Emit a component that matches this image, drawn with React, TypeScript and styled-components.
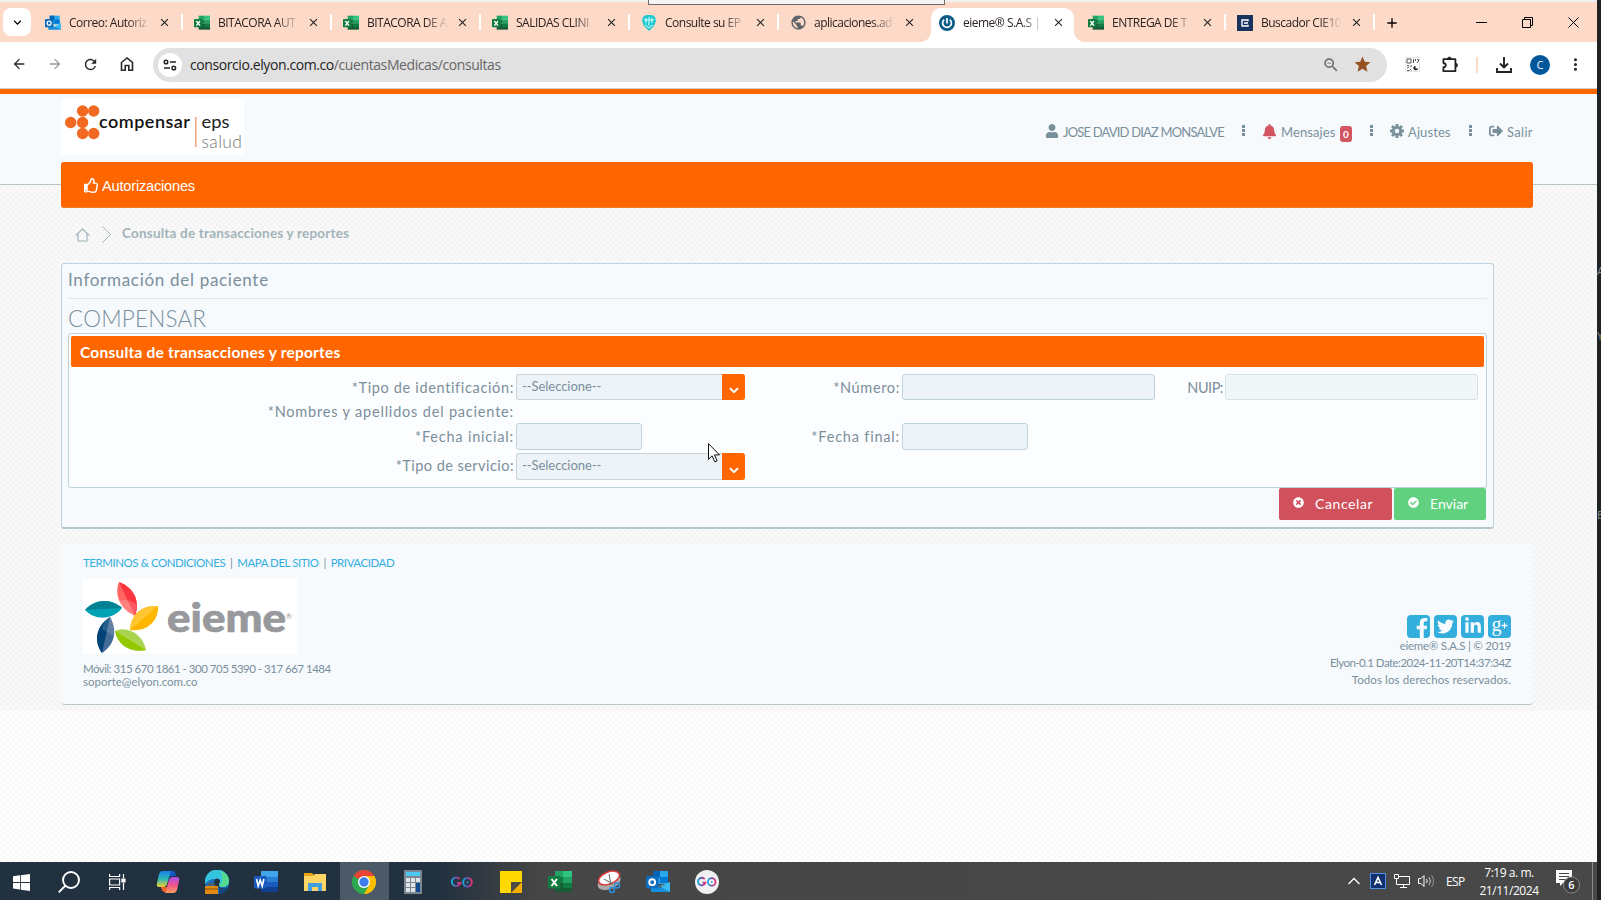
import React from 'react';
import styled, { createGlobalStyle, css } from 'styled-components';
import {
  FaUser, FaBell, FaSignOutAlt, FaRegThumbsUp, FaTimesCircle, FaCheckCircle,
  FaFacebookF, FaTwitter, FaLinkedinIn,
} from 'react-icons/fa';
import {
  MdArrowBack, MdArrowForward, MdRefresh, MdClose, MdAdd, MdStar,
  MdZoomOut, MdMoreVert, MdExpandMore, MdPublic,
} from 'react-icons/md';

const ORANGE = '#ff6600';
const SLATE = '#7a8f9c';
const ui = `'Open Sans', 'Noto Sans', sans-serif`;
const gothic = `Lato, 'Open Sans', sans-serif`;

const Global = createGlobalStyle`
  * { box-sizing: border-box; }
  body { margin: 0; overflow: hidden; font-family: ${ui}; }
  svg { display: block; flex: none; }
`;

const Screen = styled.div`
  position: relative;
  width: 1601px; height: 900px;
  display: flex; flex-direction: column;
  background: #1f2323;
  overflow: hidden;
`;
const Browser = styled.div`
  width: 1597px; height: 862px;
  display: flex; flex-direction: column;
  background: #fff;
`;

/* ---------- tab strip ---------- */
const TabStrip = styled.div`
  height: 42px; flex: none;
  display: flex; align-items: stretch;
  padding-left: 3px;
  border-top: 2px solid #f1f1f3;
  background: #fdd9c8;
`;
const TabSearch = styled.div`
  width: 28px; height: 28px; margin: 6px 3px 0 0;
  border-radius: 8px; background: #fff;
  display: flex; align-items: center; justify-content: center;
`;
const Tab = styled.div<{ $sep: boolean }>`
  width: 149px; padding-top: 6px;
  position: relative;
  ${p => p.$sep && css`
    &::after { content: ''; position: absolute; right: 0; top: 12px; width: 2px; height: 16px; background: #fff; }
  `}
`;
const TabBody = styled.div<{ $active: boolean }>`
  height: 34px; margin: 0 3px;
  padding: 0 0 5px 8px;
  display: flex; align-items: center;
  position: relative;
  border-radius: 10px 10px 0 0;
  background: ${p => (p.$active ? '#fff' : 'transparent')};
  ${p => p.$active && css`
    &::before, &::after { content: ''; position: absolute; bottom: 0; width: 10px; height: 10px; }
    &::before { left: -10px; background: radial-gradient(circle at 0 0, transparent 9.5px, #fff 10px); }
    &::after { right: -10px; background: radial-gradient(circle at 100% 0, transparent 9.5px, #fff 10px); }
  `}
`;
const TabTitle = styled.div`
  width: 81px; margin-left: 8px; margin-right: 8px; padding-top: 1px;
  overflow: hidden; white-space: nowrap;
  font: 12px/18px ${ui}; letter-spacing: -0.5px; color: #2c2320;
  mask-image: linear-gradient(90deg, #000 72%, transparent 100%);
`;
const WindowControls = styled.div`
  flex: 1; display: flex; justify-content: flex-end; align-items: center;
  gap: 35px; padding: 1px 18px 0 0;
`;
const NewTab = styled.div`
  display: flex; align-items: center; padding: 1px 0 0 9px;
`;

/* ---------- address bar ---------- */
const Toolbar = styled.div`
  height: 47px; flex: none;
  display: flex; align-items: center;
  padding: 0 10px 1px 11px;
  border-bottom: 1px solid #cfcfcf;
  background: #fff; color: #2a2a2a;
`;
const NavIcons = styled.div`
  width: 142px; display: flex; gap: 19.6px;
`;
const Address = styled.div`
  width: 1234px; height: 34px; border-radius: 17px;
  padding: 0 15px 0 5px;
  display: flex; align-items: center;
  background: #e1e1e1;
`;
const SiteInfo = styled.div`
  width: 24px; height: 24px; border-radius: 50%; background: #fff;
  display: flex; align-items: center; justify-content: center;
`;
const Url = styled.div`
  flex: 1; margin-left: 8px; padding-top: 1px;
  font: 14px/20px ${ui}; letter-spacing: -0.41px; color: #1d1d1d;
  span { color: #666; }
`;
const AddressIcons = styled.div`
  display: flex; align-items: center; gap: 13px;
`;
const Actions = styled.div`
  flex: 1; display: flex; align-items: center;
  padding-left: 18px;
`;
const Action = styled.div<{ $gap: number }>`
  margin-left: ${p => p.$gap}px;
`;
const ActionSep = styled.div`width: 2px; height: 16px; margin-left: 17px; background: #fdd9c8;`;
const Avatar = styled.div`
  width: 20px; height: 20px; border-radius: 50%;
  background: #00579c; color: #fff;
  font: 10.5px/20px ${ui}; text-align: center;
`;

/* ---------- page ---------- */
const Page = styled.main`
  flex: 1; min-height: 0;
  border-top: 5px solid ${ORANGE};
  background-color: #fff;
  background-image:
    linear-gradient(rgba(0,0,0,.022), rgba(0,0,0,.022)),
    repeating-conic-gradient(rgba(0,0,0,.02) 0 25%, transparent 0 50%);
  background-size: 100% 617px, 6px 6px;
  background-repeat: no-repeat, repeat;
  color: ${SLATE};
`;
const Header = styled.header`
  height: 91px; padding: 5px 64px 0 61px;
  background: #f6fafd; border-bottom: 1px solid #b6c3cb;
`;
const HeaderTop = styled.div`
  height: 63px; display: flex; justify-content: space-between; align-items: flex-start;
`;
const LogoBox = styled.div`width: 183px; height: 56px; background: #fff;`;
const UserMenu = styled.div`
  height: 64px; display: flex; align-items: center;
`;
const MenuItem = styled.div`
  display: flex; align-items: center; gap: 4px;
`;
const MenuText = styled.span<{ $w: number; $ls?: number }>`
  width: ${p => p.$w}px; white-space: nowrap; padding-top: 2px;
  font: 13px/18px ${gothic}; letter-spacing: ${p => p.$ls ?? 0}px;
`;
const Badge = styled.span`
  width: 12px; height: 16px; margin-top: 5px; border-radius: 3px;
  background: #d2555f; color: #fff;
  font: bold 10px/16px ${gothic}; text-align: center;
`;
const Dots = styled.i`
  width: 3px; height: 11px; margin: 0 17.5px 1px 17.5px;
  background: linear-gradient(${SLATE} 0 3px, transparent 3px 4px, ${SLATE} 4px 7px, transparent 7px 8px, ${SLATE} 8px);
`;
const MainNav = styled.nav`
  height: 46px; padding: 2px 0 0 23px;
  display: flex; align-items: center; gap: 3px;
  border-radius: 3px; background: ${ORANGE};
  border-bottom: 1px solid #ee7a2c; color: #fff;
  font: 14.6px/20px 'Liberation Sans', sans-serif; letter-spacing: -0.2px;
`;
const Crumbs = styled.div`
  height: 78px; padding: 46px 0 0 75px;
  display: flex; align-items: flex-start;
  color: #a3b3ba;
`;
const CrumbText = styled.div`
  margin: -7px 0 0 11px;
  font: bold 13.5px/18px ${gothic}; letter-spacing: 0.2px;
`;
const Panel = styled.section`
  width: 1433px; height: 266px; margin-left: 61px; padding: 0 6px 0 6px;
  border: 1px solid #bfd3de; border-bottom: 2px solid #b6c6ce; border-radius: 3px;
  background: #f6fafd;
`;
const PanelTitle = styled.h2`
  height: 35px; margin: 0; border-bottom: 1px solid #e2e9ec;
  font: 400 17px/32px ${gothic}; letter-spacing: 0.7px;
`;
const Entity = styled.h1`
  height: 34px; margin: 0;
  font: 300 22.5px/40px ${gothic}; letter-spacing: 0.2px;
`;
const Fieldset = styled.div`
  height: 155px; padding: 2px;
  border: 1px solid #bfd3de; border-radius: 3px; background: #fcfdfe;
`;
const Legend = styled.div`
  height: 31px; padding: 1px 0 0 9px; border-radius: 2px;
  background: ${ORANGE}; color: #fff;
  font: bold 15.5px/31px ${gothic}; letter-spacing: 0.22px;
`;
const Fields = styled.div`
  display: grid; padding-top: 7px;
  grid-template-columns: 443px 235px 151px 256px 67px 256px;
  grid-template-rows: 27px 22px 28px 29px;
`;
const Label = styled.label<{ $col?: number; $ls?: number }>`
  grid-column: ${p => p.$col ?? 1};
  align-self: center; justify-self: end;
  white-space: nowrap;
  font: 14.5px/20px ${gothic}; letter-spacing: ${p => p.$ls ?? 0.65}px;
`;
const Control = styled.div<{ $w: number; $dim?: boolean; $tall?: boolean }>`
  width: ${p => p.$w}px; height: ${p => (p.$tall ? 27 : 26)}px; margin-left: 2px;
  border: 1px solid ${p => (p.$dim ? '#d6e2e8' : '#bfd3de')}; border-radius: 3px;
  background: ${p => (p.$dim ? '#f1f6f9' : '#edf3f7')};
`;
const Select = styled.div<{ $low?: boolean }>`
  width: 229px; height: ${p => (p.$low ? 27 : 26)}px; margin: ${p => (p.$low ? 2 : 0)}px 0 0 2px;
  display: flex; justify-content: space-between; align-items: stretch;
  padding-left: 6px; border-radius: 3px; overflow: hidden;
  background: #edf3f7; box-shadow: inset 0 0 0 1px #c9d2d6;
  font: 13px/25px ${gothic}; letter-spacing: -0.05px;
`;
const SelectArrow = styled.span`
  width: 23px; background: ${ORANGE};
  display: flex; align-items: center; justify-content: center; padding-top: 7px;
`;
const Buttons = styled.div`
  display: flex; justify-content: flex-end; gap: 2px; padding-right: 1px;
`;
const Button = styled.button<{ $bg: string; $w: number; $ls?: number }>`
  width: ${p => p.$w}px; height: 32px; padding: 0 0 0 14px;
  display: flex; align-items: center; gap: 11px;
  border: 0; border-radius: 2px; background: ${p => p.$bg}; color: #fff;
  font: 14px/20px ${gothic}; letter-spacing: ${p => p.$ls ?? 0}px;
  svg { margin-bottom: 3px; }
`;
const Footer = styled.footer`
  width: 1472px; height: 162px; margin: 14px 0 0 61px; padding: 11px 22px 0;
  display: flex; justify-content: space-between;
  border-bottom: 1px solid #b9c6cc; border-radius: 4px;
  background: #f6fafd;
  font: 11.5px/13px ${gothic};
`;
const Links = styled.div`
  height: 25px; line-height: 18px; white-space: nowrap; letter-spacing: -0.45px;
  display: flex; gap: 4.8px;
  a { color: #34aedd; }
`;
const Contact = styled.div`
  margin-top: 8px;
  div:first-child { letter-spacing: -0.5px; }
`;
const FooterRight = styled.div`
  display: flex; flex-direction: column; align-items: flex-end;
  padding-top: 61px; line-height: 17px;
`;
const Social = styled.div`
  display: flex; gap: 4px; height: 24px; margin-bottom: -2px;
`;
const SocialTile = styled.span<{ $x?: number }>`
  width: 23px; height: 23px; border-radius: 4px;
  display: flex; align-items: flex-end; justify-content: center;
  padding-left: ${p => p.$x ?? 0}px;
  background: #34aedd; color: #f6fafd; overflow: hidden;
`;
const Fine = styled.div<{ $ls: number }>`letter-spacing: ${p => p.$ls}px;`;

/* ---------- taskbar ---------- */
const Taskbar = styled.div`
  width: 1597px; height: 38px;
  display: flex; align-items: center;
  background: linear-gradient(90deg, #213140 0, #22313f 440px, #464646 540px, #484848);
`;
const Slot = styled.div<{ $w: number; $on?: boolean }>`
  width: ${p => p.$w}px; height: 38px;
  display: flex; align-items: center; justify-content: center; padding-top: 2px;
  background: ${p => (p.$on ? '#4c5966' : 'transparent')};
`;
const Tray = styled.div`
  flex: 1; height: 38px; margin-right: 4px; display: flex; align-items: center; justify-content: flex-end;
  color: #fff; border-right: 1px solid #8b8b8b;
  font: 12px/18px ${ui};
`;
const Lang = styled.span`width: 22px; margin: 0 11px 0 11px; padding-top: 1px; letter-spacing: -0.6px;`;
const Clock = styled.div`width: 60px; text-align: center; white-space: nowrap; letter-spacing: -0.45px; padding-top: 1px;`;

/* ---------- overlays ---------- */
const TopPopup = styled.div`
  position: absolute; left: 648px; top: 0; width: 297px; height: 5px;
  border: 1px solid #6b6b6b; border-top: 0; background: #f5f5f5;
`;
const Cursor = styled.svg`position: absolute; left: 708px; top: 443px;`;
const Behind = styled.div`
  position: absolute; left: 1597px; top: 264px; width: 4px; height: 258px; overflow: hidden;
  display: flex; flex-direction: column; justify-content: space-between;
  font: 11px/14px ${ui}; color: #8b8f8f;
  span:nth-child(2) { margin-bottom: 115px; }
`;

/* ---------- drawings ---------- */
const Excel = ({ s = 16 }: { s?: number }) => (
  <svg width={s} height={s} viewBox="0 0 24 24">
    <path d="M7 1h8v6H7z" fill="#21a366" /><path d="M15 1h9v6h-9z" fill="#33c481" />
    <path d="M7 7h8v6H7z" fill="#107c41" /><path d="M15 7h9v6h-9z" fill="#21a366" />
    <path d="M7 13h17v9H7z" fill="#185c37" /><path d="M15 13h9v5h-9z" fill="#107c41" />
    <rect y="6" width="12.5" height="12.5" rx="1" fill="#107c41" />
    <path d="M3.5 9l5.5 7M9 9l-5.5 7" stroke="#fff" strokeWidth="2" />
  </svg>
);
const Outlook = ({ s = 16 }: { s?: number }) => (
  <svg width={s} height={s} viewBox="0 0 24 24">
    <path d="M7 1h15v13H7z" fill="#28a8ea" /><path d="M7 1h7v7H7z" fill="#0364b8" /><path d="M14 7h8v6h-8z" fill="#0078d4" />
    <path d="M5 12l10 6 9-6v10H5z" fill="#1490df" /><path d="M24 12v10L13 16z" fill="#50d9ff" opacity=".6" />
    <rect y="6" width="12.5" height="12.5" rx="1" fill="#0f6cbd" />
    <circle cx="6.2" cy="12.2" r="2.9" fill="none" stroke="#fff" strokeWidth="1.9" />
  </svg>
);
const Shield = () => (
  <svg width="16" height="16" viewBox="0 0 16 16">
    <path d="M2 2l3-2h6l3 2 1 4-2 5-5 5-5-5-2-5z" fill="#1fc9d2" />
    <path d="M5 3v5M8 2v9M11 3v5M3 5h10M4 10l4 3 4-3" stroke="#d9fbfb" fill="none" />
  </svg>
);
const Power = () => (
  <svg width="16" height="16" viewBox="0 0 16 16">
    <circle cx="8" cy="8" r="8" fill="#0d5c87" />
    <path d="M5.2 4.6a4.4 4.4 0 1 0 5.6 0M8 3v5.5" stroke="#fff" strokeWidth="1.7" fill="none" />
  </svg>
);
const Buscador = () => (
  <svg width="16" height="16" viewBox="0 0 16 16">
    <rect width="16" height="16" fill="#17345f" />
    <path d="M11 6.2V5H5v6h6V9.8M7 8h4" stroke="#fff" strokeWidth="1.4" fill="none" />
  </svg>
);
const CompensarLogo = () => (
  <svg width="183" height="56" viewBox="0 0 183 56">
    {[[21.6, 12], [32.7, 12], [9.7, 23.5], [21.6, 23.5], [21.6, 34.5], [32.7, 34.5]].map(([x, y]) => (
      <circle key={`${x}-${y}`} cx={x} cy={y} r="5.7" fill="#f26a21" />
    ))}
    <text x="38" y="28.5" fontFamily={gothic} fontSize="18" fontWeight="600" textLength="91" fill="#111">compensar</text>
    <path d="M134.800 18v30" stroke="#f07a36" />
    <text x="140.500" y="28.500" fontFamily={gothic} fontSize="17.500" textLength="28" lengthAdjust="spacingAndGlyphs" fill="#222">eps</text>
    <text x="140.500" y="48.500" fontFamily={gothic} fontSize="17.500" fontWeight="300" textLength="40.500" fill="#777">salud</text>
  </svg>
);
const EiemeLogo = () => (
  <svg width="214" height="75" viewBox="0 0 214 75">
    <rect width="214" height="75" fill="#fff" />
    <path d="M36 3C52 9 57 23 52 37C37 30 31 16 36 3z" fill="#ff6661" /><path d="M36 3C52 9 57 23 52 37z" fill="#fb3640" />
    <path d="M36 22Q46 19 53.500 26L52 37Q40 31 36 22z" fill="#fff" opacity=".18" />
    <path d="M2 31C12 20 28 19 39 29C30 41 12 42 2 31z" fill="#00a3b4" /><path d="M2 31C12 20 28 19 39 29z" fill="#008194" />
    <path d="M27 38C12 48 11 63 19 74C33 65 34 50 27 38z" fill="#456c96" /><path d="M27 38C12 48 11 63 19 74z" fill="#004477" />
    <path d="M27 38Q20 43 19 50L30 57Q34 48 27 38z" fill="#fff" opacity=".14" />
    <path d="M32 52C44 46 60 55 63 71C50 74 35 68 32 52z" fill="#a9d44f" /><path d="M32 52C35 68 50 74 63 71z" fill="#94c900" />
    <path d="M47 51C48 34 60 26 75 27C76 42 64 53 47 51z" fill="#ffb600" /><path d="M47 51C48 34 60 26 75 27z" fill="#ffc533" />
    <text x="84" y="52.500" fontFamily={gothic} fontSize="40" fontWeight="900" textLength="119" lengthAdjust="spacingAndGlyphs" fill="#97999d" stroke="#97999d" strokeWidth=".7">eieme</text>
    <text x="202.500" y="40" fontFamily={gothic} fontSize="8" fill="#97999d">®</text>
  </svg>
);
const Cog = () => (
  <svg width="14" height="14" viewBox="0 0 14 14">
    <circle cx="7" cy="7" r="3.7" fill="none" stroke={SLATE} strokeWidth="2.8" />
    {[0, 45, 90, 135].map(a => (
      <path key={a} d="M7 0v3M7 11v3" stroke={SLATE} strokeWidth="2.9" transform={`rotate(${a} 7 7)`} />
    ))}
  </svg>
);
const Chevron = () => (
  <svg width="10" height="7" viewBox="0 0 10 7"><path d="M1 1.2l4 4 4-4" fill="none" stroke="#fff" strokeWidth="2" /></svg>
);
const Go = () => (
  <>
    <defs>
      <linearGradient id="go"><stop offset="0" stopColor="#18a8e0" /><stop offset=".5" stopColor="#6a4fa8" /><stop offset="1" stopColor="#f02c78" /></linearGradient>
    </defs>
    <path d="M10 9A4.300 4.300 0 1 0 10.800 13H7.500" fill="none" stroke="url(#go)" strokeWidth="2" />
    <circle cx="18" cy="12.200" r="4.300" fill="none" stroke="url(#go)" strokeWidth="2" />
    <circle cx="18" cy="12.200" r="1" fill="#18a8e0" />
  </>
);

const taskIcons: React.ReactNode[] = [
  <svg key="copilot" width="24" height="24" viewBox="0 0 24 24">
    <defs>
      <linearGradient id="cl" x1="0" y1="0" x2="0" y2="1"><stop offset="0" stopColor="#1a7ff0" /><stop offset=".5" stopColor="#2bb8b0" /><stop offset="1" stopColor="#f4d030" /></linearGradient>
      <linearGradient id="cr" x1="0" y1="0" x2="0" y2="1"><stop offset="0" stopColor="#a652f0" /><stop offset=".5" stopColor="#f0528a" /><stop offset="1" stopColor="#ffa060" /></linearGradient>
    </defs>
    <path d="M13 1h4q2 0 2.500 3l.5 2h-4l-4 1z" fill="#1556c8" />
    <path d="M6 1h9l-4 13q-1 3-4 3H3q-3 0-2-4L3 4q1-3 3-3z" fill="url(#cl)" />
    <path d="M18 23H9l4-13q1-3 4-3h4q3 0 2 4l-2 9q-1 3-3 3z" fill="url(#cr)" />
    <path d="M5 17h6l-1 5q-4 1-5-5z" fill="#f0632e" />
  </svg>,
  <svg key="edge" width="24" height="24" viewBox="0 0 24 24">
    <circle cx="12" cy="12" r="12" fill="#1a6fc0" />
    <path d="M0 12A12 12 0 0 1 24 11q0 6-7 6-4 0-3-3 0-5-5-5-5 0-9 5z" fill="#35c2dc" />
    <path d="M16 1q8 3 8 10 0 6-7 6-4 0-3-2 5-1 2-14z" fill="#5be07a" opacity=".8" />
    <path d="M14 9q-4-2-5 3 0 3 3 5h3q-2-1-1-3 2-3 0-5z" fill="#213140" />
    <path d="M14 17q4 2 10 0-3 6-10 7z" fill="#13477e" />
    <rect y="16" width="13" height="8" fill="#e08a12" /><path d="M4 16v-2h5v2M0 19h13" stroke="#8a4b06" fill="none" />
  </svg>,
  <svg key="word" width="24" height="24" viewBox="0 0 24 24">
    <path d="M7 1h17v6H7z" fill="#41a5ee" /><path d="M7 7h17v5H7z" fill="#2b7cd3" /><path d="M7 12h17v5H7z" fill="#185abd" /><path d="M7 17h17v5H7z" fill="#103f91" />
    <rect y="6" width="12.5" height="12.5" rx="1" fill="#185abd" />
    <path d="M2.500 9l1.700 7 2-6 2 6 1.700-7" stroke="#fff" strokeWidth="1.6" fill="none" />
  </svg>,
  <svg key="files" width="24" height="24" viewBox="0 0 24 24">
    <path d="M1 3h8l2 2v4H1z" fill="#e8a317" /><path d="M1 6h9l2-2h11v17H1z" fill="#ffd566" />
    <path d="M5 21v-8h14v8h-4v-4H9v4z" fill="#3f9fe0" />
  </svg>,
  <svg key="chrome" width="24" height="24" viewBox="0 0 24 24">
    <circle cx="12" cy="12" r="12" fill="#2da94f" />
    <path d="M12 12L1.600 6A12 12 0 0 1 22.400 6z" fill="#ea4335" />
    <path d="M12 6h10.400A12 12 0 0 1 12 24l5.200-9z" fill="#fdbd00" />
    <circle cx="12" cy="12" r="6" fill="#fff" /><circle cx="12" cy="12" r="4.700" fill="#3b7ded" />
  </svg>,
  <svg key="calc" width="24" height="24" viewBox="0 0 24 24">
    <rect x="3" width="18" height="24" rx="1" fill="#7d8791" /><rect x="5" y="2" width="14" height="4" fill="#4cc8f0" />
    {[5, 10, 15].map(x => [8, 13, 18].map(y => <rect key={`${x}${y}`} x={x} y={y} width="4" height="4" fill="#dfe3e8" />))}
    <path d="M15 13h4v9h-4z" fill="#124a8f" />
  </svg>,
  <svg key="go" width="24" height="24" viewBox="0 0 24 24"><g transform="translate(-.5 0)"><Go /></g></svg>,
  <svg key="notes" width="24" height="24" viewBox="0 0 24 24">
    <path d="M1 1h22v11L12 23H1z" fill="#ffd800" /><path d="M12 23V12h11z" fill="#4d4a46" /><path d="M23 12v11H12z" fill="#f6b000" />
  </svg>,
  <Excel key="excel" s={24} />,
  <svg key="snip" width="24" height="24" viewBox="0 0 24 24">
    <ellipse cx="12" cy="9" rx="12" ry="7" fill="#aaa" transform="rotate(-22 12 9) translate(-1 3)" />
    <ellipse cx="12" cy="8" rx="11" ry="6" fill="#fff" stroke="#dc3b3b" strokeWidth="1.5" transform="rotate(-22 12 8)" />
    <path d="M12 4l2 11M7 9l9 5" stroke="#666" /><circle cx="15" cy="20" r="2.5" fill="none" stroke="#2f8fd8" strokeWidth="1.5" /><circle cx="20" cy="15.5" r="2.5" fill="none" stroke="#2f8fd8" strokeWidth="1.5" />
  </svg>,
  <Outlook key="outlook" s={24} />,
  <svg key="go2" width="24" height="24" viewBox="0 0 24 24"><circle cx="12" cy="12" r="12" fill="#f0f0f2" /><g transform="translate(.9 1.2) scale(.88)"><Go /></g></svg>,
];

const tabs: { title: string; icon: React.ReactNode }[] = [
  { title: 'Correo: Autoriz', icon: <Outlook /> },
  { title: 'BITACORA AUT', icon: <Excel /> },
  { title: 'BITACORA DE A', icon: <Excel /> },
  { title: 'SALIDAS CLINI', icon: <Excel /> },
  { title: 'Consulte su EP', icon: <Shield /> },
  { title: 'aplicaciones.ad', icon: <MdPublic size={17} color="#5f6368" style={{ marginRight: -1 }} /> },
  { title: 'eieme® S.A.S |', icon: <Power /> },
  { title: 'ENTREGA DE T', icon: <Excel /> },
  { title: 'Buscador CIE10', icon: <Buscador /> },
];
const ACTIVE = 6;

export default function App() {
  return (
    <Screen>
      <Global />
      <Browser>
        <TabStrip>
          <TabSearch><MdExpandMore size={15} /></TabSearch>
          {tabs.map((t, i) => (
            <Tab key={t.title} $sep={i !== ACTIVE && i !== ACTIVE - 1}>
              <TabBody $active={i === ACTIVE}>
                {t.icon}
                <TabTitle>{t.title}</TabTitle>
                <MdClose size={13} color="#222" />
              </TabBody>
            </Tab>
          ))}
          <NewTab><MdAdd size={16} /></NewTab>
          <WindowControls>
            <svg width="11" height="11"><path d="M0 5.500h11" stroke="#000" /></svg>
            <svg width="11" height="11"><path d="M.5 2.500h8v8h-8zM2.500 2.500v-2h8v8h-2" fill="none" stroke="#000" /></svg>
            <svg width="11" height="11"><path d="M.5.5l10 10M10.500.5l-10 10" stroke="#000" /></svg>
          </WindowControls>
        </TabStrip>

        <Toolbar>
          <NavIcons>
            <MdArrowBack size={16} /><MdArrowForward size={16} color="#999" /><MdRefresh size={17} />
            <svg width="16" height="16" viewBox="0 0 16 16"><path d="M2.500 6.500L8 2l5.500 4.500v7.700H9.800V9.500H6.200v4.700H2.500z" fill="none" stroke="#2a2a2a" strokeWidth="1.6" /></svg>
          </NavIcons>
          <Address>
            <SiteInfo>
              <svg width="14" height="12" viewBox="0 0 14 12" fill="none" stroke="#222" strokeWidth="1.5">
                <circle cx="3" cy="3" r="1.8" /><path d="M7 3h6M1 9h6" /><circle cx="10.8" cy="9" r="1.8" />
              </svg>
            </SiteInfo>
            <Url>consorcio.elyon.com.co<span>/cuentasMedicas/consultas</span></Url>
            <AddressIcons><MdZoomOut size={18} color="#666" /><MdStar size={19} color="#95511f" /></AddressIcons>
          </Address>
          <Actions>
            <svg width="15" height="15" viewBox="0 0 15 15" fill="none" stroke="#555">
              <path d="M.5.500h14v14H.5z" stroke="#e3e3e3" />
              <path d="M2 2h4v4H2zM8.500 2v4M10.500 2v2M12 2.500h1.500v1.500l-1.500 2M2 8.500h2M6 8v2M2 11l2-1M2 13.500h2.500M5 12l1.500 1.500" />
              <path d="M8.500 10a2.500 2.500 0 1 0 4.800 1.500h-2.800V9a2 2 0 0 0-2 1z" fill="#222" stroke="none" />
            </svg>
            <Action $gap={22}>
              <svg width="17" height="17" viewBox="0 0 17 17">
                <path d="M1.400 3.200h12v12h-12v-3.800q2.400-.5 2.400-2.200T1.400 7z" fill="none" stroke="#222" strokeWidth="1.8" strokeLinejoin="round" />
                <path d="M5.400 3a2 2 0 0 1 4 0zM13.600 7.200a2 2 0 0 1 0 4z" fill="#222" stroke="#222" strokeWidth=".6" />
              </svg>
            </Action>
            <ActionSep />
            <Action $gap={18}><svg width="16" height="16" viewBox="0 0 16 16" fill="none" stroke="#222" strokeWidth="1.9"><path d="M8 0v10M4 6.500l4 4 4-4M1 11v4h14v-4" /></svg></Action>
            <Action $gap={18}><Avatar>C</Avatar></Action>
            <Action $gap={16}><MdMoreVert size={19} /></Action>
          </Actions>
        </Toolbar>

        <Page>
          <Header>
            <HeaderTop>
              <LogoBox><CompensarLogo /></LogoBox>
              <UserMenu>
                <MenuItem><FaUser size={14} /><MenuText $w={161} $ls={-0.82}>JOSE DAVID DIAZ MONSALVE</MenuText></MenuItem>
                <Dots />
                <MenuItem><FaBell size={15} color="#d2555f" /><MenuText $w={55} $ls={0.1}>Mensajes</MenuText><Badge>0</Badge></MenuItem>
                <Dots />
                <MenuItem><Cog /><MenuText $w={43} $ls={0.1}>Ajustes</MenuText></MenuItem>
                <Dots />
                <MenuItem><FaSignOutAlt size={14} /><MenuText $w={26} $ls={0.3}>Salir</MenuText></MenuItem>
              </UserMenu>
            </HeaderTop>
            <MainNav><FaRegThumbsUp size={15} />Autorizaciones</MainNav>
          </Header>

          <Crumbs>
            <svg width="15" height="14" viewBox="0 0 15 14" style={{ marginTop: -3 }} fill="none" stroke="currentColor" strokeWidth="1.2">
              <path d="M.7 7.500L7.500 1l6.800 6.500M3 6v7h9V6" />
            </svg>
            <svg width="9" height="17" viewBox="0 0 9 17" style={{ margin: '-5px 0 0 12px' }} fill="none" stroke="currentColor"><path d="M.5.5l8 8-8 8" /></svg>
            <CrumbText>Consulta de transacciones y reportes</CrumbText>
          </Crumbs>

          <Panel>
            <PanelTitle>Información del paciente</PanelTitle>
            <Entity>COMPENSAR</Entity>
            <Fieldset>
              <Legend>Consulta de transacciones y reportes</Legend>
              <Fields>
                <Label>*Tipo de identificación:</Label>
                <Select>--Seleccione--<SelectArrow><Chevron /></SelectArrow></Select>
                <Label $col={3}>*Número:</Label>
                <Control $w={253} />
                <Label $col={5} $ls={-0.5}>NUIP:</Label>
                <Control $w={253} $dim />
                <Label $ls={0.81}>*Nombres y apellidos del paciente:</Label>
                <span />
                <Label $col={1} $ls={0.8}>*Fecha inicial:</Label>
                <Control $w={126} $tall />
                <Label $col={3} $ls={0.8}>*Fecha final:</Label>
                <Control $w={126} $tall />
                <Label $col={1} $ls={0.45}>*Tipo de servicio:</Label>
                <Select $low>--Seleccione--<SelectArrow><Chevron /></SelectArrow></Select>
              </Fields>
            </Fieldset>
            <Buttons>
              <Button $bg="#d0515c" $w={113} $ls={0.6}><FaTimesCircle size={11} />Cancelar</Button>
              <Button $bg="#61d180" $w={92}><FaCheckCircle size={11} />Enviar</Button>
            </Buttons>
          </Panel>

          <Footer>
            <div>
              <Links><a>TERMINOS &amp; CONDICIONES</a><span>|</span><a>MAPA DEL SITIO</a><span>|</span><a>PRIVACIDAD</a></Links>
              <EiemeLogo />
              <Contact><div>Móvil: 315 670 1861 - 300 705 5390 - 317 667 1484</div><div>soporte@elyon.com.co</div></Contact>
            </div>
            <FooterRight>
              <Social>
                <SocialTile $x={6}><FaFacebookF size={20} /></SocialTile>
                <SocialTile><FaTwitter size={17} style={{ marginBottom: 3 }} /></SocialTile>
                <SocialTile><FaLinkedinIn size={18} style={{ marginBottom: 3 }} /></SocialTile>
                <SocialTile>
                  <svg width="23" height="23" viewBox="0 0 23 23">
                    <text x="3.500" y="15.500" fontFamily="'Liberation Serif', serif" fontSize="20" fill="#f6fafd">g</text>
                    <path d="M13.500 10.500h6M16.500 7.500v6" stroke="#f6fafd" strokeWidth="1.300" />
                  </svg>
                </SocialTile>
              </Social>
              <Fine $ls={-0.25}>eieme® S.A.S | © 2019</Fine>
              <Fine $ls={-0.54}>Elyon-0.1 Date:2024-11-20T14:37:34Z</Fine>
              <Fine $ls={0.1}>Todos los derechos reservados.</Fine>
            </FooterRight>
          </Footer>
        </Page>
      </Browser>

      <Taskbar>
        <Slot $w={42}><svg width="17" height="17" viewBox="0 0 17 17" fill="#fff"><path d="M0 2.300l7-1V8H0zM7.800 1.200L17 0v8H7.800zM0 8.900h7v6.700l-7-1zM7.800 8.900H17V17l-9.200-1.200z" /></svg></Slot>
        <Slot $w={54}><svg width="22" height="22" viewBox="0 0 22 22" fill="none" stroke="#fff" strokeWidth="1.9"><circle cx="13" cy="9" r="8" /><path d="M7.500 14.500L.7 21.300" /></svg></Slot>
        <Slot $w={43}><svg width="17" height="16" viewBox="0 0 17 16" fill="none" stroke="#fff" strokeWidth="1.2"><path d="M.6 0v2.500h10V0M.6 16v-2.500h10V16M.6 5h10v6H.6zM14.500 0v4M14.500 9v7" /><path d="M13 5h3v3h-3z" fill="#fff" /></svg></Slot>
        <Slot $w={4.5} />
        {taskIcons.map((ic, i) => <Slot key={i} $w={49} $on={i === 4}>{ic}</Slot>)}
        <Tray>
          <svg width="12" height="8" viewBox="0 0 12 8" fill="none" stroke="#fff" strokeWidth="1.3"><path d="M.5 7L6 1.500 11.500 7" /></svg>
          <svg width="16" height="16" viewBox="0 0 16 16" style={{ marginLeft: 10 }}><rect x=".5" y=".5" width="15" height="15" fill="#12306e" stroke="#4f8fe8" /><path d="M4.500 12L8 4.500 11.500 12M6 9.500h4" stroke="#fff" strokeWidth="1.6" fill="none" /></svg>
          <svg width="16" height="14" viewBox="0 0 16 14" style={{ marginLeft: 8 }} fill="none" stroke="#fff"><path d="M5 2.500h10.500v8H5M2.500 5v5.500H5M6 13.500h7M9.500 10.500v3M.5.5h4v4h-4z" /></svg>
          <svg width="17" height="14" viewBox="0 0 17 14" style={{ marginLeft: 8 }} fill="none" stroke="#fff"><path d="M.5 4.500h2.500l3-3v11l-3-3H.5zM8.500 5q1.500 2 0 4" /><path d="M11 3q3 4 0 8" opacity=".7" /><path d="M13.500 1q4 6 0 12" opacity=".4" /></svg>
          <Lang>ESP</Lang>
          <Clock>7:19 a. m.<br />21/11/2024</Clock>
          <svg width="26" height="28" viewBox="0 0 26 28" style={{ margin: '0 11px 0 16px' }}>
            <path d="M1 3h16v13H8l-3 3v-3H1z" fill="#fff" /><path d="M4 6.500h10M4 9.500h10M4 12.500h6" stroke="#484848" />
            <circle cx="16.500" cy="18" r="8" fill="#3b3b3b" stroke="#8a8a8a" />
            <text x="16.500" y="22" textAnchor="middle" fontFamily={ui} fontSize="11" fontWeight="600" fill="#fff">6</text>
          </svg>
        </Tray>
      </Taskbar>

      <TopPopup />
      <Cursor width="13" height="20" viewBox="0 0 13 20"><path d="M.5.7v15.600l3.600-3.500 2.700 6 2.300-1-2.600-5.900h5z" fill="#fff" stroke="#111" /></Cursor>
      <Behind><span>A</span><span>Y</span><span>E</span></Behind>
    </Screen>
  );
}
